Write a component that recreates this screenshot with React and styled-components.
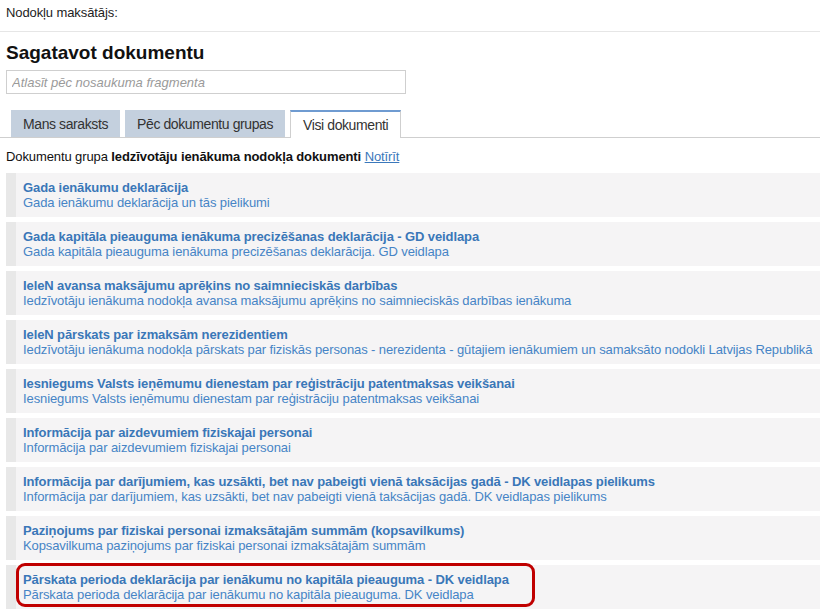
import React from 'react';
import styled, {createGlobalStyle} from 'styled-components';

const GlobalStyle = createGlobalStyle`
    body {
        margin: 0;
        background: #fff;
        font-family: "Liberation Sans", Arial, sans-serif;
        font-size: 13px;
        letter-spacing: -0.1px;
        color: #111;
    }
`;

const documents = [
    {title: 'Gada ienākumu deklarācija', info: 'Gada ienākumu deklarācija un tās pielikumi'},
    {title: 'Gada kapitāla pieauguma ienākuma precizēšanas deklarācija - GD veidlapa', info: 'Gada kapitāla pieauguma ienākuma precizēšanas deklarācija. GD veidlapa'},
    {title: 'IeleN avansa maksājumu aprēķins no saimnieciskās darbības', info: 'Iedzīvotāju ienākuma nodokļa avansa maksājumu aprēķins no saimnieciskās darbības ienākuma'},
    {title: 'IeleN pārskats par izmaksām nerezidentiem', info: 'Iedzīvotāju ienākuma nodokļa pārskats par fiziskās personas - nerezidenta - gūtajiem ienākumiem un samaksāto nodokli Latvijas Republikā'},
    {title: 'Iesniegums Valsts ieņēmumu dienestam par reģistrāciju patentmaksas veikšanai', info: 'Iesniegums Valsts ieņēmumu dienestam par reģistrāciju patentmaksas veikšanai'},
    {title: 'Informācija par aizdevumiem fiziskajai personai', info: 'Informācija par aizdevumiem fiziskajai personai'},
    {title: 'Informācija par darījumiem, kas uzsākti, bet nav pabeigti vienā taksācijas gadā - DK veidlapas pielikums', info: 'Informācija par darījumiem, kas uzsākti, bet nav pabeigti vienā taksācijas gadā. DK veidlapas pielikums'},
    {title: 'Paziņojums par fiziskai personai izmaksātajām summām (kopsavilkums)', info: 'Kopsavilkuma paziņojums par fiziskai personai izmaksātajām summām'},
    {title: 'Pārskata perioda deklarācija par ienākumu no kapitāla pieauguma - DK veidlapa', info: 'Pārskata perioda deklarācija par ienākumu no kapitāla pieauguma. DK veidlapa', marked: true},
];

const tabs = [
    {label: 'Mans saraksts'},
    {label: 'Pēc dokumentu grupas'},
    {label: 'Visi dokumenti', active: true},
];

export default function App() {
    return (
        <Page>
            <GlobalStyle />
            <TopBar>Nodokļu maksātājs:</TopBar>
            <Content>
                <Heading>Sagatavot dokumentu</Heading>
                <Search placeholder="Atlasīt pēc nosaukuma fragmenta" />
                <Tabs>
                    {tabs.map(t => (
                        <Tab key={t.label} $active={t.active}>{t.label}</Tab>
                    ))}
                </Tabs>
                <Filter>
                    Dokumentu grupa <b>Iedzīvotāju ienākuma nodokļa dokumenti</b> <ClearLink href="#">Notīrīt</ClearLink>
                </Filter>
                <List>
                    {documents.map(d => (
                        <Item key={d.title}>
                            <Strip />
                            <ItemText>
                                <ItemTitle>{d.title}</ItemTitle>
                                <ItemInfo>{d.info}</ItemInfo>
                            </ItemText>
                            {d.marked && <Highlight />}
                        </Item>
                    ))}
                </List>
            </Content>
        </Page>
    );
}

const Page = styled.div`
    width: 820px;
    height: 615px;
    overflow: hidden;
`;

const TopBar = styled.div`
    padding: 5px 6px 11px;
    line-height: 15px;
    border-bottom: 1px solid #e6e6e6;
    color: #222;
`;

const Content = styled.div`
    padding-left: 6px;
    display: flex;
    flex-direction: column;
`;

const Heading = styled.h1`
    margin: 9px 0 0;
    font-size: 19px;
    line-height: 24px;
    font-weight: bold;
    letter-spacing: 0;
    color: #111;
`;

const Search = styled.input`
    margin-top: 5px;
    width: 400px;
    height: 24px;
    box-sizing: border-box;
    border: 1px solid #cfcfcf;
    padding: 0 5px;
    font-family: "Liberation Sans", Arial, sans-serif;
    font-size: 13px;
    outline: none;
    &::placeholder {
        color: #9a9a9a;
        font-style: italic;
    }
`;

const Tabs = styled.div`
    margin: 16px 0 0 -6px;
    padding-left: 11px;
    display: flex;
    gap: 5px;
    border-bottom: 1px solid #cfcfcf;
    height: 27px;
`;

const Tab = styled.div`
    box-sizing: border-box;
    padding: 0 12px;
    display: flex;
    align-items: center;
    font-size: 14px;
    letter-spacing: -0.4px;
    color: #333;
    background: ${p => (p.$active ? '#fff' : '#c4d0de')};
    border: ${p => (p.$active ? '1px solid #cfcfcf' : 'none')};
    border-top: ${p => (p.$active ? '2px solid #6f9bd1' : 'none')};
    border-bottom: none;
    margin-bottom: ${p => (p.$active ? '-1px' : '0')};
    height: ${p => (p.$active ? '28px' : '27px')};
`;

const Filter = styled.div`
    margin-top: 11px;
    line-height: 15px;
    color: #111;
`;

const ClearLink = styled.a`
    color: #3b78bb;
    text-decoration: underline;
`;

const List = styled.div`
    margin-top: 9px;
    display: flex;
    flex-direction: column;
    gap: 5px;
`;

const Item = styled.div`
    position: relative;
    display: flex;
    height: 44px;
    background: #f5f4f5;
`;

const Strip = styled.div`
    width: 10px;
    flex: none;
    background: #e8e8e8;
`;

const ItemText = styled.div`
    padding: 7px 0 0 7px;
    display: flex;
    flex-direction: column;
    white-space: nowrap;
    line-height: 15px;
`;

const ItemTitle = styled.div`
    font-weight: bold;
    color: #3a77b8;
`;

const ItemInfo = styled.div`
    color: #4684c6;
`;

const Highlight = styled.div`
    position: absolute;
    left: 10px;
    top: -2px;
    width: 519px;
    height: 44px;
    box-sizing: border-box;
    border: 3px solid #c00000;
    border-radius: 9px;
    pointer-events: none;
`;
